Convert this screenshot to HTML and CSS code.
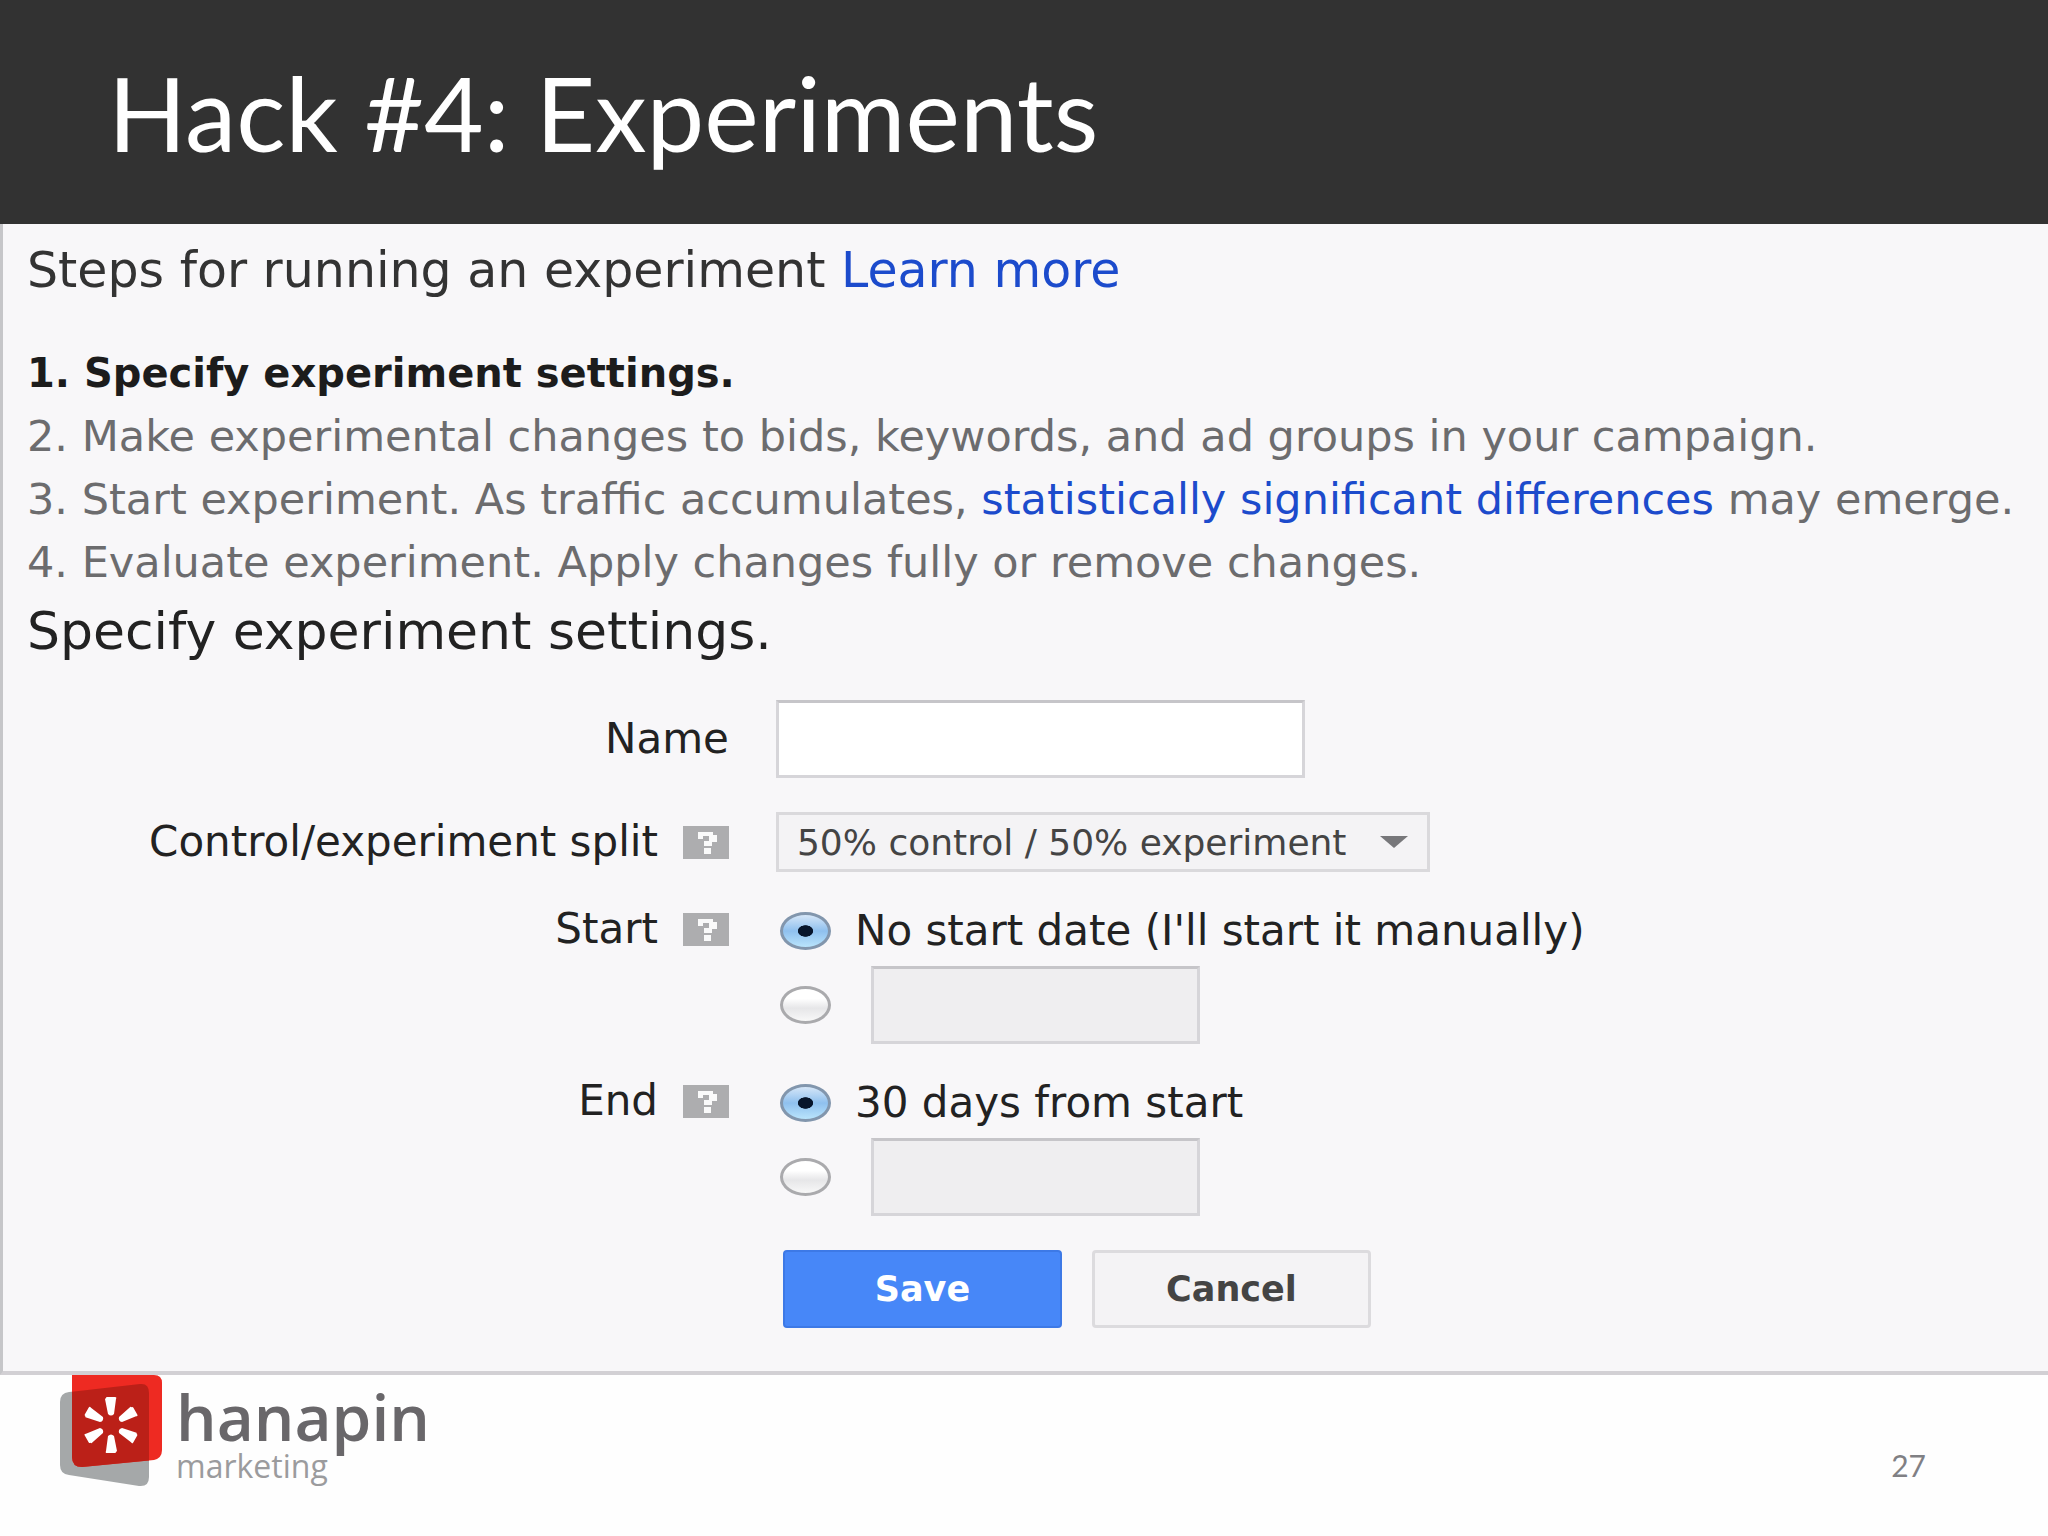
FILE: index.html
```html
<!DOCTYPE html>
<html lang="en">
<head>
<meta charset="utf-8">
<title>Hack #4: Experiments</title>
<link rel="stylesheet" href="styles.css">
</head>
<body>
<header class="title-bar"><h1>Hack #4: Experiments</h1></header>

<main class="panel">
  <h2 class="steps-title">Steps for running an experiment <a href="#learn">Learn more</a></h2>
  <ol class="steps">
    <li class="current">1. Specify experiment settings.</li>
    <li>2. Make experimental changes to bids, keywords, and ad groups in your campaign.</li>
    <li>3. Start experiment. As traffic accumulates, <a href="#significance">statistically significant differences</a> may emerge.</li>
    <li>4. Evaluate experiment. Apply changes fully or remove changes.</li>
  </ol>
  <h2 class="settings-title">Specify experiment settings.</h2>

  <form class="settings">
    <div class="label"><label for="name">Name</label></div>
    <input class="field name" id="name" type="text">

    <div class="label">
      <label for="split">Control/experiment split</label>
      <button class="help" type="button" aria-label="Help with split"><svg viewBox="0 0 46 33"><path d="M15 6h15v3h4v7h-5v4h-8v-5h5v-5h-6v3h-5zM21 22h7v6h-7z"/></svg></button>
    </div>
    <div class="select">
      <select id="split"><option>50% control / 50% experiment</option></select>
      <svg class="arrow" viewBox="0 0 28 12"><path d="M0 0h28L14 12z"/></svg>
    </div>

    <div class="label first-line">
      <span id="start-label">Start</span>
      <button class="help" type="button" aria-label="Help with start"><svg viewBox="0 0 46 33"><path d="M15 6h15v3h4v7h-5v4h-8v-5h5v-5h-6v3h-5zM21 22h7v6h-7z"/></svg></button>
    </div>
    <div class="choices" role="radiogroup" aria-labelledby="start-label">
      <label class="choice"><input type="radio" name="start" checked>No start date (I'll start it manually)</label>
      <div class="choice dated"><input type="radio" name="start" aria-label="Start on date"><input class="field date" type="text" aria-label="Start date" disabled></div>
    </div>

    <div class="label first-line">
      <span id="end-label">End</span>
      <button class="help" type="button" aria-label="Help with end"><svg viewBox="0 0 46 33"><path d="M15 6h15v3h4v7h-5v4h-8v-5h5v-5h-6v3h-5zM21 22h7v6h-7z"/></svg></button>
    </div>
    <div class="choices" role="radiogroup" aria-labelledby="end-label">
      <label class="choice"><input type="radio" name="end" checked>30 days from start</label>
      <div class="choice dated"><input type="radio" name="end" aria-label="End on date"><input class="field date" type="text" aria-label="End date" disabled></div>
    </div>

    <div class="actions">
      <button class="btn save" type="button">Save</button>
      <button class="btn cancel" type="button">Cancel</button>
    </div>
  </form>
</main>

<footer class="footer">
  <div class="brand">
    <svg class="mark" viewBox="0 0 104 114" aria-hidden="true">
      <defs>
        <path id="sheet" d="M9 17L80 9Q89 8 89 18V102Q89 112 79 111L9 100Q0 99 0 90V27Q0 18 9 17Z"/>
        <clipPath id="red-clip"><path d="M12 0H94Q102 0 102 8V75Q102 83 94 85L22 92Q12 92 12 82Z"/></clipPath>
        <path id="ray" d="M-5 -27Q-5 -28 -4 -28H4Q6 -28 5 -26L3 -11Q0 -8 -3 -11L-6 -26Z"/>
      </defs>
      <use href="#sheet" fill="#a5a8a9"/>
      <g clip-path="url(#red-clip)">
        <rect width="104" height="114" fill="#ee2a22"/>
        <use href="#sheet" fill="#bb2018"/>
      </g>
      <g transform="translate(51 50)" fill="#fff">
        <use href="#ray"/>
        <use href="#ray" transform="rotate(60)"/>
        <use href="#ray" transform="rotate(120)"/>
        <use href="#ray" transform="rotate(180)"/>
        <use href="#ray" transform="rotate(240)"/>
        <use href="#ray" transform="rotate(300)"/>
      </g>
    </svg>
    <div class="brand-text">
      <span class="brand-name">hanapin</span>
      <span class="brand-sub">marketing</span>
    </div>
  </div>
  <span class="page-number">27</span>
</footer>
</body>
</html>
```
FILE: styles.css
```css
* { box-sizing: border-box; }

body {
  margin: 0;
  background: #fefefe;
  color: #222;
  font-family: "DejaVu Sans", Verdana, sans-serif;
}

h1, h2, ol { margin: 0; padding: 0; font-weight: 400; }

a { color: #1c4bcc; text-decoration: none; }

.title-bar {
  display: flex;
  align-items: center;
  min-height: 224px;
  padding: 0 108px;
  background: #323232;
  color: #fff;
}

.title-bar h1 {
  font: 400 103px/120px Lato, sans-serif;
}

.panel {
  padding: 15px 0 43px;
  border-left: 3px solid #c6c6c9;
  border-bottom: 4px solid #d2d0d4;
  background: #f8f7f9;
}

.steps-title, .steps, .settings-title { padding-left: 24px; }

.steps-title { font-size: 49px; line-height: 64px; color: #333; }

.steps {
  margin: 39px 0 5px;
  list-style: none;
  font-size: 43px;
  line-height: 63px;
  color: #6c6c6e;
}

.steps .current { font-size: 40px; font-weight: 700; color: #1c1c1c; }

.settings-title { font-size: 52px; line-height: 64px; }

.settings {
  display: grid;
  grid-template-columns: 35.5% 1fr;
  gap: 34px 47px;
  margin-top: 37px;
  font-size: 42px;
  line-height: 50px;
}

.label {
  display: flex;
  align-items: center;
  justify-content: flex-end;
  gap: 25px;
}

.first-line { align-self: start; height: 46px; }

.help {
  width: 46px;
  height: 33px;
  padding: 0;
  border: 0;
  background: #adadaf;
}

.help svg { display: block; width: 100%; fill: #fafafa; }

.field {
  height: 78px;
  border: 3px solid #d6d5d9;
  border-top-color: #c6c5c9;
  background: #fff;
  font: inherit;
}

.name { width: 529px; }
.date { width: 329px; }
.field:disabled { background: #efeef0; }

.select { position: relative; width: 654px; }

.select select {
  display: block;
  width: 100%;
  height: 60px;
  padding: 0 18px;
  appearance: none;
  border: 3px solid #dad9dc;
  border-radius: 0;
  background: #f4f3f5;
  color: #444;
  font: 36px "DejaVu Sans", Verdana, sans-serif;
}

.arrow {
  position: absolute;
  top: 24px;
  right: 22px;
  width: 28px;
  height: 12px;
  fill: #77777a;
  pointer-events: none;
}

.choices { display: grid; gap: 10px; padding-left: 4px; }

.choice { display: flex; align-items: center; gap: 24px; }
.dated { gap: 40px; }

.choice input[type="radio"] {
  flex: none;
  width: 51px;
  height: 38px;
  margin: 0;
  appearance: none;
  border: 3px solid #aaaaad;
  border-radius: 50%;
  background: linear-gradient(#fff 30%, #e6e6e8 60%, #f8f8f8);
}

.choice input[type="radio"]:checked {
  border-color: #8296ad;
  background:
    radial-gradient(ellipse 8px 6px, #07152b 90%, transparent),
    linear-gradient(#d5e6f8, #8fc0ee 50%, #b9e4fc);
}

.actions { grid-column: 2; display: flex; gap: 30px; padding-left: 7px; }

.btn {
  width: 279px;
  height: 78px;
  padding: 0;
  border-radius: 4px;
  font: 700 35px "DejaVu Sans", Verdana, sans-serif;
}

.save { border: 2px solid #3d79e6; background: #4787f8; color: #fff; }
.cancel { border: 3px solid #dcdbde; background: #f4f3f5; color: #444; }

.footer {
  display: flex;
  align-items: flex-start;
  justify-content: space-between;
  padding: 0 122px 20px 60px;
}

.brand { display: flex; gap: 12px; }
.mark { width: 104px; height: 114px; }

.brand-text {
  display: flex;
  flex-direction: column;
  padding-top: 8px;
  font-family: "Open Sans", "Noto Sans", sans-serif;
}

.brand-name { font-size: 64px; line-height: 68px; color: #69676a; font-weight: 600; }
.brand-sub { font-size: 32px; line-height: 30px; color: #9b9b9d; }

.page-number {
  padding-top: 72px;
  color: #808084;
  font: 30px/36px Lato, sans-serif;
}
```
